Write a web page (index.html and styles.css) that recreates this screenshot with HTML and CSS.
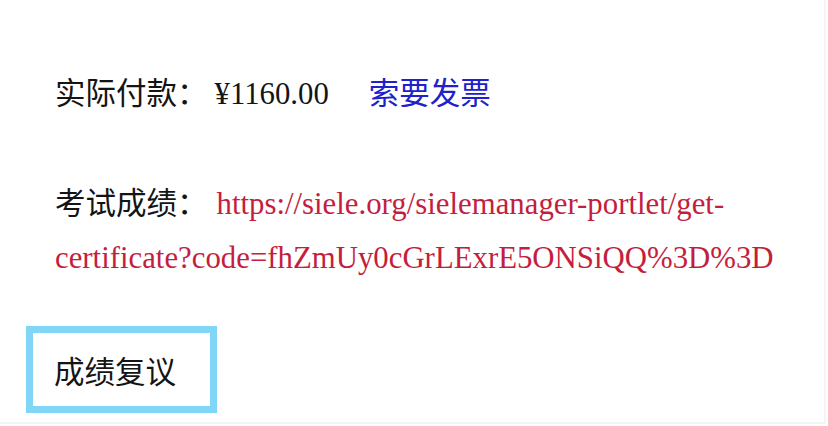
FILE: index.html
```html
<!DOCTYPE html>
<html lang="zh-CN">
<head>
<meta charset="utf-8">
<link rel="stylesheet" href="styles.css">
</head>
<body>
<main class="page">
  <p class="row row-pay"><span class="label">实际付款：</span><span class="amount">¥1160.00</span><a class="invoice" href="#">索要发票</a></p>
  <p class="row row-score"><span class="label">考试成绩：</span><a class="url" href="#">https://siele.org/sielemanager-portlet/get-certificate?code=fhZmUy0cGrLExrE5ONSiQQ%3D%3D</a></p>
  <div class="review">成绩复议</div>
</main>
</body>
</html>
```
FILE: styles.css
```css
html, body {
  margin: 0;
  padding: 0;
  background: #ffffff;
}
.page {
  width: 826px;
  height: 424px;
  box-sizing: border-box;
  border-right: 2px solid #f4f4f4;
  border-bottom: 2px solid #f4f4f4;
  padding: 66px 0 0 0;
  font-family: "Noto Sans CJK SC", "Noto Sans", sans-serif;
  font-size: 30.5px;
  color: #141414;
  overflow: hidden;
}
.row {
  margin: 0;
  padding: 0 30px 0 55px;
  line-height: 51px;
}
.row-score {
  margin-top: 56px;
}
.label {
  font-family: "Noto Sans CJK SC", sans-serif;
}
.amount {
  font-family: "Liberation Serif", serif;
  font-size: 30.8px;
  margin-left: 7px;
  color: #141414;
}
.invoice {
  margin-left: 40px;
  color: #2020cc;
  text-decoration: none;
}
.url {
  font-family: "Liberation Serif", serif;
  font-size: 30.8px;
  color: #c41e3e;
  text-decoration: none;
  margin-left: 9px;
}
.review {
  margin: 42px 0 0 26px;
  width: 191px;
  height: 87px;
  box-sizing: border-box;
  border: 7px solid #80d6f6;
  padding-left: 21px;
  display: flex;
  align-items: center;
  color: #141414;
}
```
